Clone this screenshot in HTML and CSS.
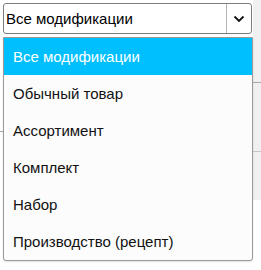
FILE: index.html
```html
<!DOCTYPE html>
<html lang="ru">
<head>
<meta charset="utf-8">
<link rel="stylesheet" href="styles.css">
</head>
<body>
<div class="page">
  <div class="gutter"><div class="rule g1"></div></div>
  <div class="main">
    <div class="select">
      <span class="select-value">Все модификации</span>
      <span class="select-btn">
        <svg width="12" height="8" viewBox="0 0 12 8"><path d="M1.5 1.5 L6 6 L10.5 1.5" fill="none" stroke="#111" stroke-width="1.8"/></svg>
      </span>
    </div>
  </div>
  <div class="side"><div class="rule s1"></div><div class="rule s2"></div></div>
  <ul class="menu">
    <li class="item active">Все модификации</li>
    <li class="item">Обычный товар</li>
    <li class="item">Ассортимент</li>
    <li class="item">Комплект</li>
    <li class="item">Набор</li>
    <li class="item">Производство (рецепт)</li>
  </ul>
</div>
</body>
</html>
```

FILE: styles.css
```css
* { box-sizing: border-box; }
html, body { margin: 0; padding: 0; }
body {
  width: 261px;
  height: 270px;
  overflow: hidden;
  background: #fff;
  font-family: "Liberation Sans", Arial, sans-serif;
  color: #111;
}
.page {
  position: relative;
  width: 261px;
  height: 270px;
  display: flex;
  align-items: flex-start;
}
.gutter { width: 3px; height: 270px; }
.main { width: 249px; padding-top: 3px; }
.side {
  margin-left: 1px;
  width: 8px;
  height: 200px;
  background: #f0f0f0;
  padding-top: 82px;
}
.rule { border-bottom: 1px solid #a8a8a8; }
.g1 { margin-top: 131px; }
.s2 { margin-top: 68px; border-color: #c8c8c8; }
.select {
  width: 249px;
  height: 31px;
  border: 1px solid #7d7d7d;
  border-radius: 3px;
  background: #fff;
  display: flex;
  align-items: center;
}
.select-value {
  flex: 1;
  padding-left: 2px;
  padding-bottom: 1px;
  font-size: 15px;
  color: #000;
  white-space: nowrap;
}
.select-btn {
  width: 25px;
  height: 100%;
  border-left: 1px solid #b4b4b4;
  display: flex;
  align-items: center;
  justify-content: center;
}
.menu {
  position: absolute;
  left: 3px;
  top: 37px;
  width: 250px;
  margin: 0;
  padding: 0;
  list-style: none;
  background: #fcfcfc;
  border: 1px solid #9a9a9a;
  border-radius: 0 0 3px 3px;
  box-shadow: 0 1px 2px rgba(0,0,0,0.12);
}
.item {
  height: 37px;
  display: flex;
  align-items: center;
  padding-left: 9px;
  font-size: 15px;
  color: #111;
  white-space: nowrap;
}
.item.active {
  background: #00bfff;
  color: #fff;
}
```
